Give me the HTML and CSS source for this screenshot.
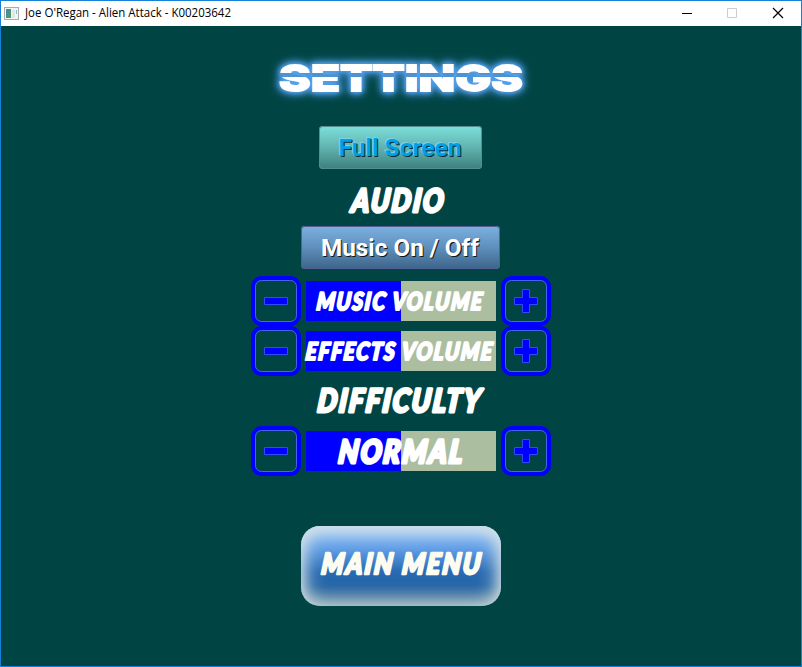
FILE: index.html
```
<!DOCTYPE html>
<html lang="en">
<head>
<meta charset="utf-8">
<title>Joe O'Regan - Alien Attack - K00203642</title>
<link rel="stylesheet" href="styles.css">
</head>
<body>
<div class="window">
  <header class="titlebar">
    <svg class="app-icon" width="15" height="13" viewBox="0 0 15 13">
      <defs><linearGradient id="app" x2="1" y2="1"><stop stop-color="#4b87ad"/><stop offset="1" stop-color="#4f9a62"/></linearGradient></defs>
      <rect x=".5" y=".5" width="14" height="12" fill="#f4f4f4" stroke="#a7abae"/>
      <rect x="2" y="2" width="5" height="9" fill="url(#app)"/>
      <rect x="8" y="3" width="3" height="8" fill="#dce8e8"/>
      <rect x="12" y="3" width="1" height="4" fill="#8ebac4"/>
    </svg>
    <svg class="caption" width="210" height="25"><text x="0" y="16" textLength="206" lengthAdjust="spacingAndGlyphs">Joe O'Regan - Alien Attack - K00203642</text></svg>
    <nav class="controls">
      <svg width="46" height="25"><path d="M19 12.5h10" stroke="#000"/></svg>
      <svg width="46" height="25"><path d="M18.500 7.500h9v9h-9z" fill="none" stroke="#ccc"/></svg>
      <svg width="46" height="25"><path d="M18 7l10 10M28 7l-10 10" stroke="#000" stroke-width="1.2"/></svg>
    </nav>
  </header>
  <main class="settings">
    <svg class="title" width="300" height="60" viewBox="251 46 300 60">
      <defs><linearGradient id="stripe" gradientUnits="userSpaceOnUse" x1="0" y1="64" x2="0" y2="92">
        <stop offset=".32" stop-color="#fff"/><stop offset=".32" stop-color="#4d93d3"/><stop offset=".45" stop-color="#4d93d3"/><stop offset=".45" stop-color="#fff"/>
      </linearGradient></defs>
      <text x="279" y="91" textLength="244" lengthAdjust="spacingAndGlyphs">SETTINGS</text>
    </svg>
    <button class="btn btn-screen"><svg width="163" height="43"><text x="19.500" y="30" textLength="123" lengthAdjust="spacingAndGlyphs">Full Screen</text></svg></button>
    <svg class="heading" width="300" height="50"><text x="101" y="36.500" textLength="94" lengthAdjust="spacingAndGlyphs">AUDIO</text></svg>
    <button class="btn btn-music"><svg width="199" height="43"><text x="20" y="30" textLength="158" lengthAdjust="spacingAndGlyphs">Music On / Off</text></svg></button>
    <section class="row">
      <button class="step"><svg width="50" height="50"><rect class="frame" x="2" y="2" width="46" height="46" rx="9"/><rect class="inset" x="4.5" y="4.5" width="41" height="41" rx="6"/><path class="sign" d="M13.5 21.5h23v7h-23z"/></svg></button>
      <svg class="meter" width="190" height="40"><text x="11" y="29" textLength="167" lengthAdjust="spacingAndGlyphs">MUSIC VOLUME</text></svg>
      <button class="step"><svg width="50" height="50"><rect class="frame" x="2" y="2" width="46" height="46" rx="9"/><rect class="inset" x="4.5" y="4.5" width="41" height="41" rx="6"/><path class="sign" d="M21.500 13.500h7v8h8v7h-8v8h-7v-8h-8v-7h8z"/></svg></button>
    </section>
    <section class="row">
      <button class="step"><svg width="50" height="50"><rect class="frame" x="2" y="2" width="46" height="46" rx="9"/><rect class="inset" x="4.5" y="4.5" width="41" height="41" rx="6"/><path class="sign" d="M13.5 21.5h23v7h-23z"/></svg></button>
      <svg class="meter" width="190" height="40"><text x="0" y="29" textLength="188" lengthAdjust="spacingAndGlyphs">EFFECTS VOLUME</text></svg>
      <button class="step"><svg width="50" height="50"><rect class="frame" x="2" y="2" width="46" height="46" rx="9"/><rect class="inset" x="4.5" y="4.5" width="41" height="41" rx="6"/><path class="sign" d="M21.500 13.500h7v8h8v7h-8v8h-7v-8h-8v-7h8z"/></svg></button>
    </section>
    <svg class="heading" width="300" height="50"><text x="67" y="36.500" textLength="165" lengthAdjust="spacingAndGlyphs">DIFFICULTY</text></svg>
    <section class="row">
      <button class="step"><svg width="50" height="50"><rect class="frame" x="2" y="2" width="46" height="46" rx="9"/><rect class="inset" x="4.5" y="4.5" width="41" height="41" rx="6"/><path class="sign" d="M13.5 21.5h23v7h-23z"/></svg></button>
      <svg class="meter meter-large" width="190" height="40"><text x="33" y="32.500" textLength="126" lengthAdjust="spacingAndGlyphs">NORMAL</text></svg>
      <button class="step"><svg width="50" height="50"><rect class="frame" x="2" y="2" width="46" height="46" rx="9"/><rect class="inset" x="4.5" y="4.5" width="41" height="41" rx="6"/><path class="sign" d="M21.500 13.500h7v8h8v7h-8v8h-7v-8h-8v-7h8z"/></svg></button>
    </section>
    <button class="main-menu"><svg width="200" height="80"><text x="21" y="48.500" textLength="161" lengthAdjust="spacingAndGlyphs">MAIN MENU</text></svg></button>
  </main>
</div>
</body>
</html>
```
FILE: styles.css
```
* { box-sizing: border-box; }
body { margin: 0; overflow: hidden; }
svg { display: block; overflow: visible; }
button { display: block; padding: 0; border: 0; background: none; }
.window {
  width: 802px; height: 667px;
  border: 1px solid #1580d8;
  background: #004443;
}
.titlebar { display: flex; align-items: center; height: 25px; padding-left: 3px; background: #fff; }
.app-icon { margin-right: 6px; margin-top: -1px; }
.caption text { font: 12px "Open Sans", "Noto Sans", sans-serif; fill: #000; }
.controls { display: flex; margin-left: auto; }
.controls svg { flex: none; }
.settings { display: flex; flex-direction: column; align-items: center; width: 300px; margin-left: 250px; padding-top: 20px; }
.title { margin-bottom: 20px; }
.title text {
  font: 800 36px Inter, sans-serif;
  fill: url(#stripe); stroke: url(#stripe); stroke-width: 1.8;
  filter: drop-shadow(0 0 2px #5aa5ef) drop-shadow(0 0 3px #4f9be8) drop-shadow(0 0 4px #3f8ac8);
}
.btn { border-radius: 4px; height: 43px; }
.btn text { font: bold 24px Roboto, sans-serif; }
.btn-screen {
  width: 163px; margin-bottom: 7px; margin-right: 2px;
  background: linear-gradient(#7de0dc, #61b3af 50%, #3c807d);
  box-shadow: inset 0 0 0 1px #548e92;
}
.btn-screen text { fill: #00a0e8; text-shadow: 1px 1px 0 #0a2c38, -1px -1px 0 #7fd0e8; }
.btn-music {
  width: 199px; margin-bottom: 7px; margin-right: 2px;
  background: linear-gradient(#7eb0e0, #5f8fbd 50%, #3c6488);
  box-shadow: inset 0 0 0 1px #535f98;
}
.btn-music text { fill: #fff; text-shadow: 1px 1px 0 #101820; }
.heading text, .meter text, .main-menu text {
  font: italic 900 32px Lato, sans-serif;
  letter-spacing: 2.5px;
  fill: #fff; stroke: #fff; stroke-width: 3; stroke-linejoin: round;
  transform: skewX(-6deg);
  transform-box: fill-box;
  transform-origin: center;
}
.row { display: flex; align-items: center; gap: 5px; width: 300px; height: 50px; }
.step { width: 50px; height: 50px; flex: none; }
.frame { fill: none; stroke: #00f; stroke-width: 4; }
.inset { fill: none; stroke: #4565ed; stroke-width: 1; }
.sign { fill: #00f; stroke: #304df5; stroke-width: 1; }
.meter { flex: none; background: linear-gradient(90deg, #00f 50%, #abbea0 50%); }
.meter text { font-size: 24.5px; stroke-width: 2.2; letter-spacing: 2px; }
.meter-large text { font-size: 32px; stroke-width: 3.2; letter-spacing: 2.5px; }
.main-menu {
  width: 200px; height: 80px; margin-top: 50px; border-radius: 19px;
  background: linear-gradient(#98c5fb 0%, #629fe7 28%, #286bb3 57%, #2464a5 75%, #56829e 100%);
  box-shadow: inset 0 0 20px 3px #d4e0dd, inset 0 6px 14px -2px #c8e0ff;
}
.main-menu text { font-size: 29px; fill: #fcfcf0; stroke: #fcfcf0; stroke-width: 2.6; }
```
